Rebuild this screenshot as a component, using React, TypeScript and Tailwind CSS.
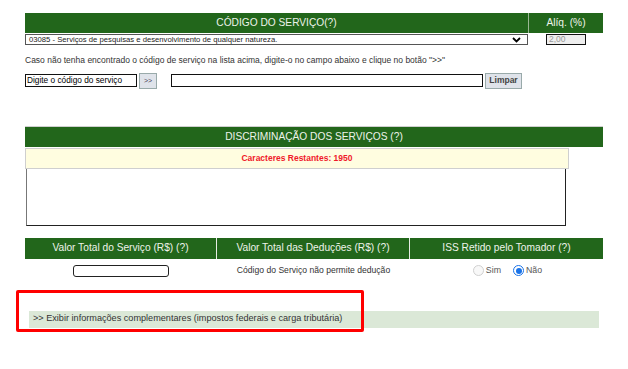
import React from "react";

const font = "font-['Liberation_Sans',Arial,sans-serif]";

function Chevron() {
  return (
    <svg width="9" height="6" viewBox="0 0 9 6" className="text-black">
      <path d="M1 1 L4.5 4.5 L8 1" fill="none" stroke="currentColor" strokeWidth="1.8" />
    </svg>
  );
}

function Radio({ checked }: { checked: boolean }) {
  return checked ? (
    <span className="flex h-[11px] w-[11px] items-center justify-center rounded-full border-[1.5px] border-[#1a73e8] bg-white">
      <span className="h-[6px] w-[6px] rounded-full bg-[#1a73e8]" />
    </span>
  ) : (
    <span className="h-[11px] w-[11px] rounded-full border border-[#d0d0d0] bg-[#f8f8f8]" />
  );
}

export default function App() {
  return (
    <div className={`relative h-[369px] w-[628px] bg-white ${font}`}>
      <div className="pl-[25px] pt-[13px]">
        {/* código do serviço */}
        <div className="flex h-[20px] w-[578px] bg-[#22661b] text-[10.2px] text-[#eef3ea]">
          <div className="flex w-[504px] items-center justify-center border-r border-[#9bb894]">
            CÓDIGO DO SERVIÇO(?)
          </div>
          <div className="flex flex-1 items-center justify-center">Alíq. (%)</div>
        </div>
        <div className="mt-[1px] flex h-[11px] w-[578px] items-center">
          <div className="flex h-[11px] w-[503px] items-center justify-between border border-[#555] bg-white pl-[3px] pr-[6px] text-[7.7px] leading-none text-[#222]">
            <span>03085 - Serviços de pesquisas e desenvolvimento de qualquer natureza.</span>
            <Chevron />
          </div>
          <div className="ml-[18px] flex h-[11px] w-[40px] items-center border-[1.5px] border-[#111] bg-[#eeeeee] pl-[2px] text-[8.5px] leading-none text-[#999]">
            2,00
          </div>
        </div>
        <p className="mt-[11px] text-[8.5px] leading-none text-[#333]">
          Caso não tenha encontrado o código de serviço na lista acima, digite-o no campo abaixo e clique no botão "&gt;&gt;"
        </p>
        <div className="mt-[8px] flex items-center">
          <div className="flex h-[13px] w-[112px] items-center border-[1.5px] border-[#111] bg-white pl-[1px] text-[8.3px] leading-none text-black">
            Digite o código do serviço
          </div>
          <button className="ml-[2px] flex h-[16px] w-[18px] items-center justify-center border border-[#9aa] bg-[#dfe3ea] text-[7px] leading-none text-[#445]">
            &gt;&gt;
          </button>
          <div className="ml-[14px] h-[13px] w-[312px] border-[1.5px] border-[#111] bg-white" />
          <button className="ml-[2px] flex h-[16px] w-[37px] items-center justify-center border border-[#9aa] bg-[#dfe3ea] text-[8.5px] font-bold leading-none text-[#444]">
            Limpar
          </button>
        </div>

        {/* discriminação */}
        <div className="mt-[37px] flex h-[21px] w-[578px] items-center justify-center border-t border-[#cfcfcf] bg-[#22661b] text-[10.2px] text-[#eef3ea]">
          DISCRIMINAÇÃO DOS SERVIÇOS (?)
        </div>
        <div className="mt-[1px] flex h-[21px] w-[544px] items-center justify-center border border-[#cfcfcf] bg-[#fffde0] text-[8.5px] font-bold text-[#f0192a]">
          Caracteres Restantes: 1950
        </div>
        <div className="ml-[1px] h-[57px] w-[540px] border-b-[1.5px] border-l-[1.5px] border-r-[1.5px] border-b-[#222] border-l-[#777] border-r-[#222] bg-white" />

        {/* valores */}
        <div className="mt-[12px] flex h-[21px] w-[578px] bg-[#22661b] text-[10.2px] text-[#eef3ea]">
          <div className="flex w-[192px] items-center justify-center border-r border-[#e6ede4]">
            Valor Total do Serviço (R$) (?)
          </div>
          <div className="flex w-[193px] items-center justify-center border-r border-[#e6ede4]">
            Valor Total das Deduções (R$) (?)
          </div>
          <div className="flex flex-1 items-center justify-center">ISS Retido pelo Tomador (?)</div>
        </div>
        <div className="flex h-[24px] w-[578px] items-center">
          <div className="flex w-[192px] justify-center">
            <div className="h-[12px] w-[96px] rounded-[3px] border-[1.5px] border-[#222] bg-white" />
          </div>
          <div className="flex w-[193px] justify-center text-[8.6px] text-[#333]">
            Código do Serviço não permite dedução
          </div>
          <div className="flex flex-1 items-center justify-center gap-[2px] pl-[2px] text-[8.8px] text-[#555]">
            <Radio checked={false} />
            <span>Sim</span>
            <span className="ml-[8px]" />
            <Radio checked={true} />
            <span>Não</span>
          </div>
        </div>

        <div className="ml-[4px] mt-[28px] flex h-[17px] w-[570px] items-center bg-[#dbe8d7] pl-[4px] text-[9.15px] text-[#333]">
          &gt;&gt; Exibir informações complementares (impostos federais e carga tributária)
        </div>
      </div>

      {/* red highlight annotation */}
      <div className="absolute left-[16px] top-[290px] h-[42px] w-[348px] rounded-[2px] border-[3px] border-[#ff0000]" />
    </div>
  );
}
